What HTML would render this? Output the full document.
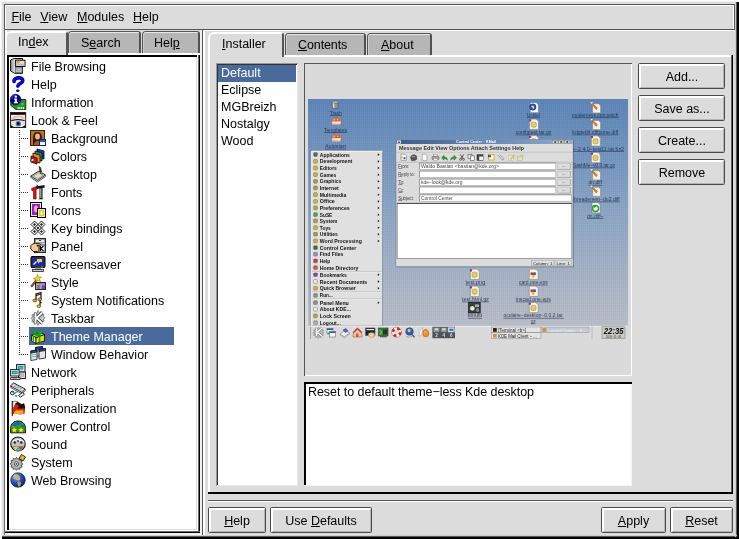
<!DOCTYPE html>
<html>
<head>
<meta charset="utf-8">
<title>KDE Control Center</title>
<style>
html,body{margin:0;padding:0;}
body{width:739px;height:539px;overflow:hidden;background:#dcdcdc;position:relative;
 font-family:"Liberation Sans",sans-serif;font-size:12.5px;color:#000;letter-spacing:0;}
#root{position:absolute;left:0;top:0;width:739px;height:539px;will-change:transform;opacity:0.999;}
.a{position:absolute;box-sizing:border-box;}
.l{position:absolute;}
u{text-decoration:underline;text-underline-offset:1px;text-decoration-thickness:1px;}
.mi{position:absolute;top:9px;line-height:16px;height:16px;white-space:nowrap;}
.tab{position:absolute;box-sizing:border-box;background:#b6b6b6;
 border-top:1px solid #555;border-left:1px solid #555;border-right:2px solid #505050;
 border-radius:4px 3px 0 0;text-align:center;white-space:nowrap;}
.tab:before{content:"";position:absolute;left:0;top:0;right:0;bottom:0;border-top:1px solid #e8e8e8;border-left:1px solid #ccc;border-radius:3px 1px 0 0;}
.tab.act{background:#dcdcdc;border-top:2px solid #fff;border-left:2px solid #fff;border-right:2px solid #555;border-radius:6px 3px 0 0;}
.tab.act:before{display:none;}
.row{position:absolute;height:18px;line-height:18px;white-space:nowrap;}
.sel{background:#4a6a9c;color:#fff;}
.ico{position:absolute;width:16px;height:16px;overflow:visible;}
.btn{position:absolute;box-sizing:border-box;background:#dcdcdc;text-align:center;white-space:nowrap;
 border:1px solid #4a4a4a;border-radius:1.5px;}
.btn:before{content:"";position:absolute;left:0;top:0;right:0;bottom:0;border-right:1px solid #b4b4b4;border-bottom:1px solid #b4b4b4;border-top:2px solid #fff;border-left:2px solid #fff;}
.btn span{position:relative;}
</style>
</head>
<body>
<div id="root">
<div class="l" style="left:736px;top:2px;width:1px;height:537px;background:#5a5a5a;"></div>
<div class="l" style="left:2px;top:536px;width:737px;height:1px;background:#5a5a5a;"></div>
<div class="l" style="left:735px;top:2px;width:1px;height:535px;background:#cfcfcf;"></div>
<div class="l" style="left:2px;top:535px;width:735px;height:1px;background:#cfcfcf;"></div>
<div class="l" style="left:737px;top:2px;width:2px;height:537px;background:#000;"></div>
<div class="l" style="left:2px;top:537px;width:737px;height:2px;background:#000;"></div>
<div class="l" style="left:0px;top:0px;width:739px;height:1px;background:#fff;"></div>
<div class="l" style="left:0px;top:0px;width:1px;height:539px;background:#fff;"></div>
<div class="l" style="left:1px;top:1px;width:738px;height:1px;background:#f0f0f0;"></div>
<div class="l" style="left:1px;top:1px;width:1px;height:538px;background:#f0f0f0;"></div>
<div class="a" style="left:4px;top:4px;width:731px;height:26px;border:1px solid #555;background:#dcdcdc"></div>
<div class="l" style="left:5px;top:5px;width:729px;height:1px;background:#fff;"></div>
<div class="l" style="left:5px;top:5px;width:1px;height:24px;background:#fff;"></div>
<div class="l" style="left:733px;top:5px;width:1px;height:24px;background:#fff;"></div>
<span class="mi" style="left:11.400px"><u>F</u>ile</span>
<span class="mi" style="left:40.300px"><u>V</u>iew</span>
<span class="mi" style="left:77px"><u>M</u>odules</span>
<span class="mi" style="left:133px"><u>H</u>elp</span>
<div class="l" style="left:4px;top:30px;width:1px;height:505px;background:#666;"></div>
<div class="l" style="left:5px;top:30px;width:2px;height:503px;background:#fff;"></div>
<div class="tab act" style="left:5px;top:31px;width:63px;height:25px;line-height:18px;text-align:left;padding-left:11px">In<u>d</u>ex</div>
<div class="tab" style="left:68px;top:31px;width:73px;height:22px;line-height:23px;text-align:left;padding-left:12px">S<u>e</u>arch</div>
<div class="tab" style="left:142px;top:31px;width:58px;height:22px;line-height:23px;text-align:left;padding-left:11px">Hel<u>p</u></div>
<div class="l" style="left:68px;top:53px;width:132px;height:2px;background:#fff;"></div>
<div class="l" style="left:9px;top:57px;width:188px;height:473px;background:#fff;"></div>
<div class="l" style="left:7px;top:55px;width:2px;height:476px;background:#000;"></div>
<div class="l" style="left:7px;top:55px;width:190px;height:2px;background:#000;"></div>
<div class="l" style="left:196px;top:57px;width:1px;height:474px;background:#dcdcdc;"></div>
<div class="l" style="left:197px;top:55px;width:1px;height:476px;background:#fff;"></div>
<div class="l" style="left:9px;top:529px;width:188px;height:1px;background:#dcdcdc;"></div>
<div class="l" style="left:7px;top:530px;width:191px;height:1px;background:#fff;"></div>
<div class="l" style="left:198px;top:55px;width:1px;height:478px;background:#666;"></div>
<div class="l" style="left:199px;top:55px;width:1px;height:478px;background:#000;"></div>
<div class="l" style="left:5px;top:531px;width:195px;height:1px;background:#666;"></div>
<div class="l" style="left:5px;top:532px;width:195px;height:1px;background:#000;"></div>
<div class="l" style="left:200px;top:30px;width:2px;height:505px;background:#eee;"></div>
<div class="l" style="left:5px;top:533px;width:197px;height:2px;background:#f2f2f2;"></div>
<svg class="l" style="left:0;top:0" width="210" height="539" shape-rendering="crispEdges"><path d="M19.5 130V355" stroke="#333" stroke-width="1" stroke-dasharray="1 1"/><path d="M19 138.5H28" stroke="#333" stroke-width="1" stroke-dasharray="1 1"/><path d="M19 156.5H28" stroke="#333" stroke-width="1" stroke-dasharray="1 1"/><path d="M19 174.5H28" stroke="#333" stroke-width="1" stroke-dasharray="1 1"/><path d="M19 192.5H28" stroke="#333" stroke-width="1" stroke-dasharray="1 1"/><path d="M19 210.5H28" stroke="#333" stroke-width="1" stroke-dasharray="1 1"/><path d="M19 228.5H28" stroke="#333" stroke-width="1" stroke-dasharray="1 1"/><path d="M19 246.5H28" stroke="#333" stroke-width="1" stroke-dasharray="1 1"/><path d="M19 264.5H28" stroke="#333" stroke-width="1" stroke-dasharray="1 1"/><path d="M19 282.5H28" stroke="#333" stroke-width="1" stroke-dasharray="1 1"/><path d="M19 300.5H28" stroke="#333" stroke-width="1" stroke-dasharray="1 1"/><path d="M19 318.5H28" stroke="#333" stroke-width="1" stroke-dasharray="1 1"/><path d="M19 336.5H28" stroke="#333" stroke-width="1" stroke-dasharray="1 1"/><path d="M19 354.5H28" stroke="#333" stroke-width="1" stroke-dasharray="1 1"/></svg>
<svg class="ico" style="left:10px;top:58px" viewBox="0 0 16 16">
<defs><linearGradient id="gfb" x1="0" y1="0" x2="1" y2="0"><stop offset="0" stop-color="#8c8c8c"/><stop offset="1" stop-color="#e4e4e4"/></linearGradient></defs>
<path d="M.6 2L4.200 .500H12.500V15.300H4.700L.6 13z" fill="#c4c4c4" stroke="#000" stroke-width="1"/>
<path d="M1 2.200L4.800 .900V14.800L1 12.800z" fill="url(#gfb)"/>
<rect x="5.500" y="9.200" width="6.600" height="5.300" fill="#bcbcbc" stroke="#555" stroke-width=".6"/>
<rect x="7" y="11" width="3.600" height="1.500" fill="#e0e0e0" stroke="#777" stroke-width=".4"/>
<rect x="5.600" y="2.200" width="9.400" height="6.300" fill="#d4d4d4" stroke="#000" stroke-width=".9"/>
<rect x="6.500" y="2.800" width="3.200" height="2.600" fill="#f09848"/>
<rect x="9.700" y="3.300" width="4.500" height="2.400" fill="#f8dcc0"/>
<rect x="6.300" y="5.800" width="8" height="2.200" fill="#c0c0c0"/>
</svg><span class="row" style="left:31px;top:58px">File Browsing</span>
<svg class="ico" style="left:10px;top:76px" viewBox="0 0 16 16">
<path d="M4 5.400C3.500 1.300 12.800 .400 12.800 4.400 12.800 7.300 8.400 7.600 7.900 10" fill="none" stroke="#000058" stroke-width="3.600" stroke-linecap="round"/>
<path d="M4 5.400C3.500 1.300 12.800 .400 12.800 4.400 12.800 7.300 8.400 7.600 7.900 10" fill="none" stroke="#0808e8" stroke-width="2.400" stroke-linecap="round"/>
<path d="M7.800 11.200V9.500" stroke="#dcdcdc" stroke-width="0"/>
<ellipse cx="7.800" cy="14.800" rx="1.700" ry="1.200" fill="#000058"/><ellipse cx="7.800" cy="14.800" rx="1.100" ry=".7" fill="#0808e8"/>
</svg><span class="row" style="left:31px;top:76px">Help</span>
<svg class="ico" style="left:10px;top:94px" viewBox="0 0 16 16">
<path d="M.8 5.500H15.800V15.400H6L.8 11.500z" fill="#14a028" stroke="#042808" stroke-width=".9"/>
<rect x="7.600" y="13" width="1.100" height="2.200" fill="#f8f8c0"/><rect x="9.400" y="13" width="1.100" height="2.200" fill="#f8f8c0"/><rect x="11.200" y="13" width="1.100" height="2.200" fill="#f8f8c0"/><rect x="13" y="13" width="1.100" height="2.200" fill="#f8f8c0"/>
<rect x="13" y="6.800" width="2" height="1.300" fill="#e03820"/><rect x="11.500" y="9" width="2" height="1.800" fill="#a0a0a0"/>
<circle cx="5.600" cy="5.500" r="5.300" fill="#080890" stroke="#000030" stroke-width=".7"/>
<path d="M1.500 4.500A4.500 4.500 0 0 1 6 1" stroke="#2838e0" stroke-width="1.200" fill="none"/>
<rect x="4.900" y="4.600" width="2" height="4.200" fill="#fff"/><rect x="4" y="4.600" width="1.500" height="1" fill="#fff"/><rect x="3.800" y="8.200" width="4.200" height="1.100" fill="#fff"/><rect x="4.700" y="1.700" width="2.200" height="1.900" fill="#fff"/>
</svg><span class="row" style="left:31px;top:94px">Information</span>
<svg class="ico" style="left:10px;top:112px" viewBox="0 0 16 16">
<rect x=".4" y=".6" width="15.300" height="14.800" fill="#f8ecea" stroke="#000" stroke-width=".9"/>
<rect x=".8" y="1" width="14.500" height="1.800" fill="#0a0606"/>
<path d="M1.500 7.500Q5 3.800 10 4.600T14.500 7.500" stroke="#eeb8b0" stroke-width="1.800" fill="none"/>
<path d="M1.200 8.800Q8 6.500 14.800 8.800" stroke="#201818" stroke-width="1.100" fill="none"/>
<path d="M1.200 11.500Q8 8 14.800 11.500Q8 15.500 1.200 11.500z" fill="#fff" stroke="#988" stroke-width=".4"/>
<circle cx="8.300" cy="11.700" r="2.700" fill="#4878b8"/><circle cx="8.300" cy="11.700" r="1.900" fill="#20a0a0" opacity=".6"/>
<circle cx="8.300" cy="11.700" r="1.400" fill="#000"/>
<path d="M.8 14.900h3l-3-2zM15.300 14.900h-3l3-2z" fill="#0a0606"/>
</svg><span class="row" style="left:31px;top:112px">Look &amp; Feel</span>
<svg class="ico" style="left:30px;top:130px" viewBox="0 0 16 16">
<rect x=".5" y=".5" width="14" height="15" fill="#b87030" stroke="#402008" stroke-width="1"/>
<path d="M3 15V9c0-2 0-7 4.500-7S12 7 12 9v6z" fill="#3a1c0c"/>
<ellipse cx="7.500" cy="6.500" rx="2.400" ry="3" fill="#f0b878"/>
<path d="M4 15c0-3 2-4 3.500-4s3.500 1 3.500 4z" fill="#a85828"/>
<rect x="9.500" y="9.500" width="6" height="6" fill="#f4f4f4" stroke="#182870" stroke-width="1"/>
<rect x="10" y="10" width="5" height="2" fill="#2858c8"/>
</svg><span class="row" style="left:51px;top:130px">Background</span>
<svg class="ico" style="left:30px;top:148px" viewBox="0 0 16 16">
<path d="M7 1l7 2v8l-7-2z" fill="#1838d0" stroke="#000" stroke-width=".8"/>
<path d="M5 3l7 2v8l-7-2z" fill="#18a040" stroke="#000" stroke-width=".8"/>
<path d="M3 5l7 2v8l-7-2z" fill="#f08818" stroke="#000" stroke-width=".8"/>
<path d="M1 8l6 2v6l-6-2z" fill="#e01818" stroke="#000" stroke-width=".8"/>
<path d="M1 11l3-1v3l-3 1z" fill="#f8d8c0" stroke="#000" stroke-width=".6"/>
</svg><span class="row" style="left:51px;top:148px">Colors</span>
<svg class="ico" style="left:30px;top:166px" viewBox="0 0 16 16">
<path d="M.8 10L9 5l6.500 4-8 5.500z" fill="#c8c8c8" stroke="#333" stroke-width="1"/>
<path d="M3.500 10L9 6.800l4 2.400-5.500 3.600z" fill="#f0d8c0" stroke="#888" stroke-width=".6"/>
<path d="M.8 10v1.500l6.700 4.500 8-5.500V9" fill="none" stroke="#555" stroke-width="1"/>
<path d="M9 .500l1.500 1L12 8l-1.500-.5z" fill="#444" stroke="#111" stroke-width=".7"/>
<path d="M11 6l1.500 3" stroke="#999" stroke-width="1"/>
</svg><span class="row" style="left:51px;top:166px">Desktop</span>
<svg class="ico" style="left:30px;top:184px" viewBox="0 0 16 16">
<path d="M1.500 4.500l6-2.500.6 2.600-2 .8V15H3.500V6.200l-1.500.7z" fill="#e01010" stroke="#600" stroke-width=".6"/>
<path d="M6 2.500l8.500-1.500v3l-2-.2V14.500l1 .8H8.500l1-.8V4.300l-2.500.6z" fill="#111"/>
<path d="M10 4.500h1.500v9.500H10z" fill="#999"/>
<path d="M6.500 1l2 1.500" stroke="#333" stroke-width="1"/>
</svg><span class="row" style="left:51px;top:184px">Fonts</span>
<svg class="ico" style="left:30px;top:202px" viewBox="0 0 16 16">
<rect x=".5" y=".5" width="11" height="14" fill="#e8e8e8" stroke="#000" stroke-width="1"/>
<rect x="2" y="2" width="8" height="11" fill="#a020b0"/>
<ellipse cx="6" cy="7" rx="2" ry="3.500" fill="#e8a8e0"/>
<rect x="7.500" y="6.500" width="8" height="9" fill="#e8e8e8" stroke="#000" stroke-width="1"/>
<rect x="9" y="8" width="5" height="6" fill="#d8d018"/>
<ellipse cx="11.500" cy="11" rx="1.300" ry="2" fill="#f8f8a0"/>
</svg><span class="row" style="left:51px;top:202px">Icons</span>
<svg class="ico" style="left:30px;top:220px" viewBox="0 0 16 16">
<g stroke="#111" stroke-width=".9" fill="#f4f4f4">
<path d="M4.500 1L8 4.500 4.500 8 1 4.500z"/><path d="M11.500 1L15 4.500 11.500 8 8 4.500z"/>
<path d="M8 4.500L11.500 8 8 11.500 4.500 8z"/><path d="M4.500 8L8 11.500 4.500 15 1 11.500z"/>
<path d="M11.500 8L15 11.500 11.500 15 8 11.500z"/></g>
<g fill="#222"><path d="M4.500 3L6 4.500 4.500 6 3 4.500z"/><path d="M11.500 3L13 4.500 11.500 6 10 4.500z"/><path d="M8 6.500L9.500 8 8 9.500 6.500 8z"/><path d="M4.500 10L6 11.500 4.500 13 3 11.500z"/><path d="M11.500 10L13 11.500 11.500 13 10 11.500z"/></g>
</svg><span class="row" style="left:51px;top:220px">Key bindings</span>
<svg class="ico" style="left:30px;top:238px" viewBox="0 0 16 16">
<rect x="4.500" y=".5" width="11" height="14" fill="#c4c4c4" stroke="#222" stroke-width="1"/>
<rect x="5.500" y="1.500" width="9" height="3" fill="#e8e8e8" stroke="#666" stroke-width=".5"/>
<path d="M9 2.500h2" stroke="#333"/>
<rect x="9" y="7" width="6" height="7" fill="#f0f0f0" stroke="#333" stroke-width=".7"/>
<path d="M10.500 8v5M13.500 8l-3 2.500 3 2.500" stroke="#000" stroke-width="1.100" fill="none"/>
<path d="M.8 7.500c1-1.500 3-2 4.500-2l4.500.2c1 0 1 1.600 0 1.600H7v.7h2v4.500L7.500 13.500H3.500L.8 11z" fill="#f4c898" stroke="#201008" stroke-width=".9"/>
</svg><span class="row" style="left:51px;top:238px">Panel</span>
<svg class="ico" style="left:30px;top:256px" viewBox="0 0 16 16">
<rect x="1" y=".5" width="14" height="11" rx="1" fill="#303030" stroke="#000" stroke-width="1"/>
<rect x="2.500" y="2" width="11" height="8" fill="#1828c0"/>
<path d="M7 3h5v3H9.500L8 8V6H7z" fill="#f0d820"/>
<path d="M3 8l3-3 1 1-3 3z" fill="#e8e8f8"/>
<rect x="5" y="11.500" width="6" height="2" fill="#999"/>
<rect x="2.500" y="13.500" width="11" height="2" fill="#c8c8c8" stroke="#222" stroke-width=".8"/>
<rect x="11" y="10.500" width="2" height="1" fill="#30e040"/>
</svg><span class="row" style="left:51px;top:256px">Screensaver</span>
<svg class="ico" style="left:30px;top:274px" viewBox="0 0 16 16">
<path d="M.8 12L6.500 5l1.200 1L2 13z" fill="#c85018" stroke="#401000" stroke-width=".7"/>
<path d="M7.500 .500l1 2.800 3-.3-2.300 2 1.600 2.600-2.900-1.200L5.700 8.800l.4-3L3.200 4.400l3-.6z" fill="#f8e020" stroke="#806000" stroke-width=".5"/>
<rect x="5.500" y="8.500" width="10" height="7" fill="#d0d0d0" stroke="#222" stroke-width="1"/>
<rect x="6" y="9" width="9" height="1.500" fill="#888"/>
<rect x="11.500" y="11" width="3.500" height="4" fill="#9038c8"/>
<rect x="7" y="11.500" width="3" height="3" fill="#f0f0f0" stroke="#444" stroke-width=".6"/>
<path d="M7.700 12.200l1.600 1.600m0-1.600l-1.600 1.600" stroke="#000" stroke-width=".7"/>
</svg><span class="row" style="left:51px;top:274px">Style</span>
<svg class="ico" style="left:30px;top:292px" viewBox="0 0 16 16">
<path d="M6 8V2l5-1.500V7" fill="none" stroke="#111" stroke-width="1.200"/>
<path d="M6 3.500l5-1.500" stroke="#111" stroke-width="1.200"/>
<ellipse cx="4.800" cy="8.500" rx="1.900" ry="1.500" fill="#f09818" stroke="#402000" stroke-width=".6"/>
<ellipse cx="9.800" cy="7.300" rx="1.900" ry="1.500" fill="#f09818" stroke="#402000" stroke-width=".6"/>
<path d="M10 14V9.500l1.500 1.500" fill="none" stroke="#111" stroke-width="1.100"/>
<ellipse cx="8.800" cy="14.200" rx="1.800" ry="1.400" fill="#f8c020" stroke="#402000" stroke-width=".6"/>
</svg><span class="row" style="left:51px;top:292px">System Notifications</span>
<svg class="ico" style="left:30px;top:310px" viewBox="0 0 16 16">
<path d="M8 .500l1.300 2 2.200-1 .3 2.400 2.400.3-1 2.200 2 1.300-2 1.300 1 2.200-2.400.3-.3 2.400-2.200-1L8 15.500l-1.300-2-2.200 1-.3-2.400-2.400-.3 1-2.200-2-1.300 2-1.300-1-2.200 2.400-.3.3-2.400 2.200 1z" fill="#c8c8c8" stroke="#666" stroke-width=".7"/>
<path d="M5.500 3v10M12 2.800L6.500 8l5.800 5.300" stroke="#222" stroke-width="3.400" fill="none"/>
<path d="M5.500 3v10M12 2.800L6.500 8l5.800 5.300" stroke="#fcfcfc" stroke-width="2" fill="none"/>
</svg><span class="row" style="left:51px;top:310px">Taskbar</span>
<div class="l" style="left:29px;top:327px;width:145px;height:18px;background:#4a6a9c;"></div>
<svg class="ico" style="left:30px;top:328px" viewBox="0 0 16 16">
<path d="M1.500 7l4.500 2.500v6L1.500 13z" fill="#f8f4b0" stroke="#201800" stroke-width=".9"/>
<path d="M6 9.500l8.500-3v6.500L6 15.500z" fill="#e8d818" stroke="#201800" stroke-width=".9"/>
<path d="M1.500 7L10 4.500l4.500 2L6 9.500z" fill="#f4ec40" stroke="#201800" stroke-width=".9"/>
<path d="M3.300 8v6M9.500 8.300v6" stroke="#10a818" stroke-width="1.600"/>
<path d="M3.500 5.800l7.500 2.200M5 8l6.500-2.500" stroke="#10a818" stroke-width="1.500"/>
<path d="M7.500 5.500C5 2 2.500 2.500 3 4s3 2 4.500 1.500C9 2 12.500 1.500 12.500 3.500S9.500 6 7.500 5.500z" fill="#18c020" stroke="#087010" stroke-width=".6"/>
</svg><span class="row" style="left:51px;top:328px;color:#fff">Theme Manager</span>
<svg class="ico" style="left:30px;top:346px" viewBox="0 0 16 16">
<g stroke="#111" stroke-width=".8">
<path d="M5.500 1.500l7-1v9l-7 1z" fill="#d8d8d8"/><path d="M5.500 1.500l7-1v2l-7 1z" fill="#2848c0"/>
<path d="M9 3.500l6.500-1v9.500L9 13z" fill="#e4e4e4"/><path d="M9 3.500l6.500-1v2L9 5.500z" fill="#2848c0"/>
<path d="M.8 5L7 4v9.500L.8 14.500z" fill="#e8e8e8"/><path d="M.8 5L7 4v2L.8 7z" fill="#2848c0"/>
</g>
<path d="M2 9l4-.6M2 11l4-.6" stroke="#5aa" stroke-width=".9"/>
</svg><span class="row" style="left:51px;top:346px">Window Behavior</span>
<svg class="ico" style="left:10px;top:364px" viewBox="0 0 16 16">
<rect x="6.500" y=".6" width="8.500" height="7.400" fill="#e8e8e8" stroke="#111" stroke-width=".9"/>
<rect x="8" y="2" width="5" height="3.200" fill="#30b8c0" stroke="#066" stroke-width=".4"/>
<rect x="8.500" y="8" width="7" height="6.500" fill="#dcdcdc" stroke="#111" stroke-width=".9"/>
<path d="M10 10h4M10 12h4" stroke="#777" stroke-width=".7"/>
<rect x=".6" y="5.600" width="8.500" height="6.400" fill="#f0f0f0" stroke="#111" stroke-width=".9"/>
<rect x="2" y="7" width="5.200" height="3" fill="#30b8c0" stroke="#066" stroke-width=".4"/>
<path d="M.6 13.500h9.500v2H.6z" fill="#e4e4e4" stroke="#111" stroke-width=".8"/>
<path d="M2 14.500h5" stroke="#888" stroke-width=".6"/>
</svg><span class="row" style="left:31px;top:364px">Network</span>
<svg class="ico" style="left:10px;top:382px" viewBox="0 0 16 16">
<path d="M.6 4L3.500 .800 15.200 7 12 10.500z" fill="#ececec" stroke="#111" stroke-width=".9"/>
<path d="M2.500 3.500l10 5.300M3.500 2.300l10 5.300M4.500 5.200l2-2.200M7 6.500l2-2.200M9.500 7.800l2-2.200" stroke="#888" stroke-width=".6"/>
<path d="M.6 4v1.500L12 12l3.200-3.500V7" fill="none" stroke="#333" stroke-width=".8"/>
<circle cx="2.300" cy="11" r="1.800" fill="#f4f4f4" stroke="#111" stroke-width=".9"/>
<path d="M2.300 9.300v1.500" stroke="#111" stroke-width=".6"/>
<path d="M4 12l3-2.200" stroke="#18a8b8" stroke-width="1.400"/>
<path d="M8.500 13.500l4-3 2 1.700-4 3z" fill="#f0f0f0" stroke="#111" stroke-width=".9"/>
<rect x="5" y="13" width="2" height="1.700" fill="#18a8b8"/>
</svg><span class="row" style="left:31px;top:382px">Peripherals</span>
<svg class="ico" style="left:10px;top:400px" viewBox="0 0 16 16">
<path d="M2.300 1v14.700" stroke="#111" stroke-width="1.200"/>
<path d="M2.800 1.800c1.500-1.500 3 .5 4.500-.6l1.500 3-6 4z" fill="#f8f8f8" stroke="#222" stroke-width=".6"/>
<path d="M5 4c2-3 4-1.500 5.500-.5s2 .5 3.500-.5l1.200 4-1 6-11 .5z" fill="#181010"/>
<path d="M4.500 5.500c1.500-2 3-1.500 4.500.2l-2 3.500H3z" fill="#e01810"/>
<path d="M2.800 9c1.500-2 2.500 1.500 4-1 1 2.500 2.500-1.500 4 1 1-1.500 2.500-.5 4-.5l-.5 6c-2-1.500-4 1-6-.5s-4 1-5.500-.5z" fill="#e02010"/>
<path d="M4 13c1-3 2-1 3-3.500 1 3 2-1 3 1.500 1-2 2.500 0 3.500 0l-.3 3.300c-1.500-1.500-3.500.8-5.500-.3S5.500 15 4 14z" fill="#f8b018"/>
<path d="M10 7l2-3 1.500 3.500z" fill="#181010"/>
</svg><span class="row" style="left:31px;top:400px">Personalization</span>
<svg class="ico" style="left:10px;top:418px" viewBox="0 0 16 16">
<path d="M.6 14.800V10.500C.6 5.500 4 3 8 3s7.400 2.500 7.400 7.500v4.300z" fill="#28a028" stroke="#081808" stroke-width="1"/>
<path d="M3 6.500c2-2.500 5-3 7.500-2 1 1.500-.5 2.500-2.500 2.500S5 8.500 3 8z" fill="#2858d0"/>
<path d="M11.500 7c1.500-.5 2.500.5 3 2-1.500 1-3 0-3-2z" fill="#2858d0"/>
<path d="M1.500 9.500c1.500-1 3-.5 3.500.5" stroke="#58d058" stroke-width="1" fill="none"/>
<g fill="#f8ec20" stroke="#403000" stroke-width=".35"><path d="M4.300 8.800l1 2 2.200.3-1.600 1.500.4 2.200-2-1-2 1 .4-2.200L1.100 11.100l2.200-.3z"/><path d="M11 8.800l1 2 2.200.3-1.600 1.500.4 2.200-2-1-2 1 .4-2.200-1.600-1.500 2.200-.3z"/></g>
</svg><span class="row" style="left:31px;top:418px">Power Control</span>
<svg class="ico" style="left:10px;top:436px" viewBox="0 0 16 16">
<ellipse cx="8" cy="8" rx="7.300" ry="7" fill="#c0c0c0" stroke="#181818" stroke-width="1.100"/>
<path d="M1.500 6C3 2 13 2 14.500 6 12 4.500 4 4.500 1.500 6z" fill="#f0f0f0"/>
<circle cx="4.800" cy="6.500" r="1.200" fill="#282828"/><circle cx="11.200" cy="6.500" r="1.200" fill="#282828"/><circle cx="8" cy="5" r="1" fill="#444"/>
<path d="M3 10.500h10L11 14.500H5z" fill="#e8e8e8" stroke="#444" stroke-width=".5"/>
<path d="M5 14.500l3-4 3 4z" fill="#28c0c0"/><path d="M3.500 11l4.500-.5-3 4z" fill="#e8d020"/><path d="M12.500 11L8 10.500l3 4z" fill="#e03828"/>
</svg><span class="row" style="left:31px;top:436px">Sound</span>
<svg class="ico" style="left:10px;top:454px" viewBox="0 0 16 16">
<path d="M6.500 3.500l1.200 1.700 2-.8.2 2.100 2.100.2-.8 2 1.700 1.200-1.700 1.200.8 2-2.100.2-.2 2.100-2-.8-1.200 1.700-1.200-1.700-2 .8-.2-2.100-2.100-.2.8-2L.1 9.900l1.700-1.200-.8-2 2.100-.2.2-2.100 2 .8z" fill="#b8b8b8" stroke="#333" stroke-width=".8"/>
<circle cx="6.500" cy="9.900" r="2.200" fill="#f0f0f0" stroke="#333" stroke-width=".8"/>
<circle cx="6.500" cy="9.900" r=".9" fill="#333"/>
<path d="M11.500 .500l4 2.500-2.500 4-4-2.500z" fill="#f8dc18" stroke="#181000" stroke-width=".9"/>
<path d="M11.700 2.700l1.600 1-1 1.600-1.600-1z" fill="#fff8c0" stroke="#604000" stroke-width=".5"/>
</svg><span class="row" style="left:31px;top:454px">System</span>
<svg class="ico" style="left:10px;top:472px" viewBox="0 0 16 16">
<defs><radialGradient id="gw" cx=".35" cy=".3" r=".8"><stop offset="0" stop-color="#78a8f0"/><stop offset=".5" stop-color="#2050c0"/><stop offset="1" stop-color="#081848"/></radialGradient></defs>
<circle cx="8" cy="8" r="7.300" fill="url(#gw)" stroke="#0a1840" stroke-width=".6"/>
<path d="M4 3.500c2-1.500 4-1 5 0s0 2 1 3-1 2.500-2.500 2S6 7 4.500 7 2.500 5 4 3.500z" fill="#d0b070"/>
<path d="M8 9.500c1.500-.5 3 .5 3 2s-1 3-2 3-1.500-2-1.500-3-.5-1.700.5-2z" fill="#b89858"/>
<path d="M3.500 4c1-1 2-1 2.500-.5" stroke="#f0e0b0" stroke-width=".8" fill="none"/>
</svg><span class="row" style="left:31px;top:472px">Web Browsing</span>
<div class="l" style="left:202px;top:30px;width:1px;height:505px;background:#555;"></div>
<div class="l" style="left:203px;top:30px;width:531px;height:1px;background:#fff;"></div>
<div class="l" style="left:203px;top:30px;width:2px;height:505px;background:#fff;"></div>
<div class="tab act" style="left:208px;top:32px;width:76px;height:25px;line-height:20px;text-align:left;padding-left:12px"><u>I</u>nstaller</div>
<div class="tab" style="left:285px;top:33px;width:81px;height:22px;line-height:22px;text-align:left;padding-left:12px;letter-spacing:-0.1px"><u>C</u>ontents</div>
<div class="tab" style="left:367px;top:33px;width:65px;height:22px;line-height:22px;text-align:left;padding-left:13px"><u>A</u>bout</div>
<div class="l" style="left:284px;top:55px;width:448px;height:2px;background:#fff;"></div>
<div class="l" style="left:208px;top:55px;width:2px;height:438px;background:#fff;"></div>
<div class="l" style="left:731px;top:55px;width:1px;height:439px;background:#666;"></div>
<div class="l" style="left:732px;top:55px;width:1px;height:439px;background:#000;"></div>
<div class="l" style="left:208px;top:492px;width:525px;height:2px;background:#000;"></div>
<div class="l" style="left:216px;top:63px;width:82px;height:423px;background:#fff;"></div>
<div class="l" style="left:216px;top:63px;width:82px;height:1px;background:#999;"></div>
<div class="l" style="left:216px;top:63px;width:1px;height:423px;background:#999;"></div>
<div class="l" style="left:217px;top:64px;width:81px;height:1px;background:#333;"></div>
<div class="l" style="left:217px;top:64px;width:1px;height:422px;background:#333;"></div>
<div class="l" style="left:297px;top:64px;width:1px;height:422px;background:#e8e8e8;"></div>
<div class="l" style="left:217px;top:485px;width:81px;height:1px;background:#e8e8e8;"></div>
<div class="l" style="left:218px;top:65px;width:78px;height:17px;background:#4a6a9c;"></div>
<span class="row" style="left:221px;top:64px;height:17px;line-height:18px;color:#fff">Default</span>
<span class="row" style="left:221px;top:81px;height:17px;line-height:18px">Eclipse</span>
<span class="row" style="left:221px;top:98px;height:17px;line-height:18px">MGBreizh</span>
<span class="row" style="left:221px;top:115px;height:17px;line-height:18px">Nostalgy</span>
<span class="row" style="left:221px;top:132px;height:17px;line-height:18px">Wood</span>
<div class="l" style="left:304px;top:63px;width:328px;height:313px;background:#dadada;"></div>
<div class="l" style="left:304px;top:63px;width:328px;height:1px;background:#555;"></div>
<div class="l" style="left:304px;top:63px;width:1px;height:313px;background:#555;"></div>
<div class="l" style="left:631px;top:64px;width:1px;height:312px;background:#fff;"></div>
<div class="l" style="left:305px;top:375px;width:327px;height:1px;background:#fff;"></div>
<svg class="l" style="left:308px;top:99px" width="320" height="240" viewBox="308 99 320 240" font-family="Liberation Sans, sans-serif"><defs><linearGradient id="dg" x1="0" y1="0" x2="0" y2="1"><stop offset="0" stop-color="#5c84b8"/><stop offset=".17" stop-color="#6c90bc"/><stop offset=".5" stop-color="#8ea6c4"/><stop offset=".75" stop-color="#a6b2c4"/><stop offset=".92" stop-color="#b6bcc6"/><stop offset="1" stop-color="#bcc0c6"/></linearGradient><linearGradient id="tg" x1="0" y1="0" x2="1" y2="0"><stop offset="0" stop-color="#3c5c96"/><stop offset="1" stop-color="#90acd2"/></linearGradient><pattern id="dith" width="2" height="2" patternUnits="userSpaceOnUse"><rect width="1" height="1" fill="#fff" opacity=".035"/><rect x="1" y="1" width="1" height="1" fill="#000" opacity=".03"/></pattern></defs><rect x="308" y="99" width="320" height="240" fill="url(#dg)"/><rect x="308" y="99" width="320" height="240" fill="url(#dith)"/><path d="M332.0 102.2h6.400l-.5 6.300h-5.400z" fill="#a8a8a8" stroke="#444" stroke-width=".5"/><path d="M333.5 102.5v5.500" stroke="#e8e8e8" stroke-width="1"/><path d="M336.0 102.5v5.500M337.3 102.5v5.500" stroke="#666" stroke-width=".5"/><ellipse cx="335.2" cy="102.1" rx="3.400" ry="1" fill="#d0d0d0" stroke="#444" stroke-width=".5"/><text x="329.8" y="114.6" font-size="4.8" fill="#1c2a48" opacity=".88" textLength="12.0" lengthAdjust="spacingAndGlyphs">Trash</text><rect x="329.8" y="115.2" width="12.0" height=".6" fill="#1c2a48" opacity=".85"/><path d="M332.1 118.6l7.600-.8 1.200 1v5.500l-1 1.200-7.300-.4-.8-1z" fill="#f4e6dc" stroke="#8a5a48" stroke-width=".4"/><path d="M332.3 118.8l7.300-.8 1 1v2.300l-8.300 .2z" fill="#dc4c2c"/><path d="M333.3 119.3l2-.2v1.500l-2 .1zM336.8 119.0l1.800-.2v1.500l-1.800 .1z" fill="#f4c040"/><path d="M332.6 124.1l7.500 .4.800-1" stroke="#8c8480" stroke-width=".8" fill="none"/><text x="324.0" y="131.6" font-size="4.8" fill="#1c2a48" opacity=".88" textLength="23.0" lengthAdjust="spacingAndGlyphs">Templates</text><rect x="324.0" y="132.2" width="23.0" height=".6" fill="#1c2a48" opacity=".85"/><path d="M332.1 135.3l7.600-.8 1.200 1v5.500l-1 1.200-7.300-.4-.8-1z" fill="#f4e6dc" stroke="#8a5a48" stroke-width=".4"/><path d="M332.3 135.5l7.300-.8 1 1v2.300l-8.300 .2z" fill="#dc4c2c"/><path d="M333.3 136.0l2-.2v1.500l-2 .1zM336.8 135.7l1.800-.2v1.500l-1.800 .1z" fill="#f4c040"/><path d="M332.6 140.8l7.500 .4.800-1" stroke="#8c8480" stroke-width=".8" fill="none"/><text x="325.0" y="148.1" font-size="4.8" fill="#1c2a48" opacity=".88" textLength="21.0" lengthAdjust="spacingAndGlyphs">Autostart</text><rect x="325.0" y="148.7" width="21.0" height=".6" fill="#1c2a48" opacity=".85"/><g transform="translate(533.5 107.3) scale(1.32) translate(-533.5 -107.3)"><path d="M531.0 103.6h4.500l1.800 1.800v6h-6.300z" fill="#f6f6f6" stroke="#70757c" stroke-width=".5"/><circle cx="533.0" cy="107.1" r="2.400" fill="#2858c8" stroke="#102868" stroke-width=".4"/><path d="M531.8 106.3q1.200-.8 2 .4t-.6 1.800z" fill="#e8d8a0"/></g><text x="526.8" y="116.9" font-size="4.8" fill="#1c2a48" opacity=".88" textLength="13.0" lengthAdjust="spacingAndGlyphs">Untitel</text><rect x="526.8" y="117.5" width="13.0" height=".6" fill="#1c2a48" opacity=".85"/><g transform="translate(533.5 124) scale(1.32) translate(-533.5 -124)"><path d="M530.5 120.3h5l1.800 1.800v6h-6.800z" fill="#f6f2ea" stroke="#8a8478" stroke-width=".5"/><rect x="531.8" y="122.6" width="3.800" height="3.800" rx="1.200" fill="#e4d060" stroke="#988030" stroke-width=".4"/><rect x="530.1" y="120.39999999999999" width="1.700" height="1.700" fill="#9030b0"/></g><text x="515.8" y="134.0" font-size="4.8" fill="#1c2a48" opacity=".88" textLength="35.5" lengthAdjust="spacingAndGlyphs">configtest.tar.gz</text><rect x="515.8" y="134.6" width="35.5" height=".6" fill="#1c2a48" opacity=".85"/><g transform="translate(533.5 140.5) scale(1.32) translate(-533.5 -140.5)"><path d="M530.5 136.8h5l1.800 1.800v6h-6.800z" fill="#f6f2ea" stroke="#8a8478" stroke-width=".5"/><rect x="531.8" y="139.10000000000002" width="3.800" height="3.800" rx="1.200" fill="#e4d060" stroke="#988030" stroke-width=".4"/><rect x="530.1" y="136.9" width="1.700" height="1.700" fill="#9030b0"/></g><g transform="translate(595.3 107.3) scale(1.32) translate(-595.3 -107.3)"><path d="M593.3 104.6h4.500l1.500 1.500v5.500h-6z" fill="#f4f0e8" stroke="#8a8478" stroke-width=".5"/><path d="M591.3 103.1l5.500 4.500-.8 1.500z" fill="#f08818" stroke="#a04800" stroke-width=".4"/><path d="M591.3 103.1l2.200 .6-.9 1.200z" fill="#fff4c0"/></g><text x="572.0" y="116.9" font-size="4.8" fill="#1c2a48" opacity=".88" textLength="46.5" lengthAdjust="spacingAndGlyphs">modernsys.cpp.patch</text><rect x="572.0" y="117.5" width="46.5" height=".6" fill="#1c2a48" opacity=".85"/><g transform="translate(595.3 124) scale(1.32) translate(-595.3 -124)"><path d="M593.3 121.3h4.500l1.500 1.500v5.500h-6z" fill="#f4f0e8" stroke="#8a8478" stroke-width=".5"/><path d="M591.3 119.8l5.500 4.500-.8 1.500z" fill="#f08818" stroke="#a04800" stroke-width=".4"/><path d="M591.3 119.8l2.200 .6-.9 1.200z" fill="#fff4c0"/></g><text x="572.3" y="134.0" font-size="4.8" fill="#1c2a48" opacity=".88" textLength="46.0" lengthAdjust="spacingAndGlyphs">kdgtetbl.cfftyone.diff</text><rect x="572.3" y="134.6" width="46.0" height=".6" fill="#1c2a48" opacity=".85"/><g transform="translate(595.3 140.7) scale(1.32) translate(-595.3 -140.7)"><path d="M592.3 137.0h5l1.800 1.800v6h-6.800z" fill="#f6f2ea" stroke="#8a8478" stroke-width=".5"/><rect x="593.5999999999999" y="139.3" width="3.800" height="3.800" rx="1.200" fill="#e4d060" stroke="#988030" stroke-width=".4"/><rect x="591.9" y="137.1" width="1.700" height="1.700" fill="#9030b0"/></g><text x="572.0" y="150.7" font-size="4.8" fill="#1c2a48" opacity=".88" textLength="52.0" lengthAdjust="spacingAndGlyphs">e&#8722;2.4.0&#8722;test11.tar.bz2</text><rect x="572.0" y="151.3" width="52.0" height=".6" fill="#1c2a48" opacity=".85"/><g transform="translate(595.3 157.3) scale(1.32) translate(-595.3 -157.3)"><path d="M592.3 153.60000000000002h5l1.800 1.800v6h-6.800z" fill="#f6f2ea" stroke="#8a8478" stroke-width=".5"/><rect x="593.5999999999999" y="155.90000000000003" width="3.800" height="3.800" rx="1.200" fill="#e4d060" stroke="#988030" stroke-width=".4"/><rect x="591.9" y="153.70000000000002" width="1.700" height="1.700" fill="#9030b0"/></g><text x="573.0" y="167.0" font-size="4.8" fill="#1c2a48" opacity=".88" textLength="42.0" lengthAdjust="spacingAndGlyphs">SashMe&#8722;v0.9.tar.gz</text><rect x="573.0" y="167.6" width="42.0" height=".6" fill="#1c2a48" opacity=".85"/><g transform="translate(595.3 174.3) scale(1.32) translate(-595.3 -174.3)"><path d="M593.3 171.60000000000002h4.500l1.500 1.500v5.500h-6z" fill="#f4f0e8" stroke="#8a8478" stroke-width=".5"/><path d="M591.3 170.10000000000002l5.500 4.500-.8 1.500z" fill="#f08818" stroke="#a04800" stroke-width=".4"/><path d="M591.3 170.10000000000002l2.200 .6-.9 1.200z" fill="#fff4c0"/></g><text x="588.4" y="184.3" font-size="4.8" fill="#1c2a48" opacity=".88" textLength="13.7" lengthAdjust="spacingAndGlyphs">dn.diff</text><rect x="588.4" y="184.9" width="13.7" height=".6" fill="#1c2a48" opacity=".85"/><g transform="translate(595.3 190.7) scale(1.32) translate(-595.3 -190.7)"><path d="M593.3 188.0h4.500l1.500 1.500v5.500h-6z" fill="#f4f0e8" stroke="#8a8478" stroke-width=".5"/><path d="M591.3 186.5l5.500 4.500-.8 1.500z" fill="#f08818" stroke="#a04800" stroke-width=".4"/><path d="M591.3 186.5l2.200 .6-.9 1.200z" fill="#fff4c0"/></g><text x="572.9" y="201.0" font-size="4.8" fill="#1c2a48" opacity=".88" textLength="46.7" lengthAdjust="spacingAndGlyphs">threadenem&#8722;du2.diff</text><rect x="572.9" y="201.6" width="46.7" height=".6" fill="#1c2a48" opacity=".85"/><g transform="translate(595.3 207.5) scale(1.32) translate(-595.3 -207.5)"><path d="M592.8 203.8h4.500l1.800 1.800v6h-6.300z" fill="#f6f6f6" stroke="#70757c" stroke-width=".5"/><circle cx="595.5" cy="208.3" r="2.300" fill="none" stroke="#28a030" stroke-width="1.100"/><path d="M593.8 205.8l2.500 .3-1.500 2z" fill="#28a030"/></g><text x="587.1" y="217.7" font-size="4.8" fill="#1c2a48" opacity=".88" textLength="16.4" lengthAdjust="spacingAndGlyphs">dn.diff~</text><rect x="587.1" y="218.3" width="16.4" height=".6" fill="#1c2a48" opacity=".85"/><g transform="translate(474.3 274) scale(1.32) translate(-474.3 -274)"><path d="M471.3 270.3h5l1.800 1.800v6h-6.800z" fill="#f6f2ea" stroke="#8a8478" stroke-width=".5"/><rect x="472.6" y="272.6" width="3.800" height="3.800" rx="1.200" fill="#e4d060" stroke="#988030" stroke-width=".4"/><rect x="470.90000000000003" y="270.40000000000003" width="1.700" height="1.700" fill="#9030b0"/></g><text x="465.5" y="284.1" font-size="4.8" fill="#1c2a48" opacity=".88" textLength="19.8" lengthAdjust="spacingAndGlyphs">test.png</text><rect x="465.5" y="284.7" width="19.8" height=".6" fill="#1c2a48" opacity=".85"/><g transform="translate(474.3 291) scale(1.32) translate(-474.3 -291)"><path d="M471.3 287.3h5l1.800 1.800v6h-6.800z" fill="#f6f2ea" stroke="#8a8478" stroke-width=".5"/><rect x="472.6" y="289.6" width="3.800" height="3.800" rx="1.200" fill="#e4d060" stroke="#988030" stroke-width=".4"/><rect x="470.90000000000003" y="287.40000000000003" width="1.700" height="1.700" fill="#9030b0"/></g><text x="462.0" y="301.0" font-size="4.8" fill="#1c2a48" opacity=".88" textLength="27.0" lengthAdjust="spacingAndGlyphs">test.html.gz</text><rect x="462.0" y="301.6" width="27.0" height=".6" fill="#1c2a48" opacity=".85"/><g transform="translate(474.3 307.3) scale(1.32) translate(-474.3 -307.3)"><rect x="469.8" y="303.6" width="9" height="8" fill="#384038" stroke="#101810" stroke-width=".5"/><circle cx="472.8" cy="308.1" r="2" fill="#e8e8e8" stroke="#111" stroke-width=".4"/><path d="M474.8 305.1h3v2h-3z" fill="#a8b0a8"/><path d="M475.8 308.1h2v2.500h-2z" fill="#889088"/></g><text x="467.8" y="317.3" font-size="4.8" fill="#1c2a48" opacity=".88" textLength="14.2" lengthAdjust="spacingAndGlyphs">kmulti</text><rect x="467.8" y="317.9" width="14.2" height=".6" fill="#1c2a48" opacity=".85"/><g transform="translate(533.2 274) scale(1.32) translate(-533.2 -274)"><path d="M530.2 270.3h5l1.800 1.800v6h-6.800z" fill="#f6f2ea" stroke="#8a8478" stroke-width=".5"/><rect x="531.2" y="272.8" width="2" height="2" fill="#d83020"/><rect x="533.2" y="272.8" width="2" height="2" fill="#3050c8"/><rect x="532.2" y="274.8" width="2" height="2" fill="#e8c020"/></g><text x="519.0" y="284.1" font-size="4.8" fill="#1c2a48" opacity=".88" textLength="28.6" lengthAdjust="spacingAndGlyphs">card.one.eps</text><rect x="519.0" y="284.7" width="28.6" height=".6" fill="#1c2a48" opacity=".85"/><g transform="translate(533.2 291) scale(1.32) translate(-533.2 -291)"><path d="M530.2 287.3h5l1.800 1.800v6h-6.800z" fill="#f6f2ea" stroke="#8a8478" stroke-width=".5"/><rect x="531.2" y="289.8" width="2" height="2" fill="#d83020"/><rect x="533.2" y="289.8" width="2" height="2" fill="#3050c8"/><rect x="532.2" y="291.8" width="2" height="2" fill="#e8c020"/></g><text x="515.8" y="301.0" font-size="4.8" fill="#1c2a48" opacity=".88" textLength="35.0" lengthAdjust="spacingAndGlyphs">inscad.one.eps</text><rect x="515.8" y="301.6" width="35.0" height=".6" fill="#1c2a48" opacity=".85"/><g transform="translate(533.2 307.3) scale(1.32) translate(-533.2 -307.3)"><path d="M530.2 303.6h5l1.800 1.800v6h-6.800z" fill="#f6f2ea" stroke="#8a8478" stroke-width=".5"/><rect x="531.5" y="305.90000000000003" width="3.800" height="3.800" rx="1.200" fill="#e4d060" stroke="#988030" stroke-width=".4"/><rect x="529.8000000000001" y="303.70000000000005" width="1.700" height="1.700" fill="#9030b0"/></g><text x="503.4" y="317.3" font-size="4.8" fill="#1c2a48" opacity=".88" textLength="60.3" lengthAdjust="spacingAndGlyphs">oculaire&#8722;desktop&#8722;0.0.2.tar.</text><rect x="503.4" y="317.9" width="60.3" height=".6" fill="#1c2a48" opacity=".85"/><text x="531.0" y="322.9" font-size="4.8" fill="#1c2a48" opacity=".88" textLength="4.6" lengthAdjust="spacingAndGlyphs">gz</text><rect x="531.0" y="323.5" width="4.6" height=".6" fill="#1c2a48" opacity=".85"/><rect x="397" y="140.5" width="177" height="127.0" fill="#000" opacity=".18"/><rect x="396" y="139.5" width="177" height="127.0" fill="#dcdcdc" stroke="#6c7480" stroke-width=".6"/><rect x="396.4" y="139.9" width="176.2" height="4.200" fill="url(#tg)"/><rect x="397" y="140.3" width="4" height="3.400" fill="#d8d8d8"/><path d="M398 142.9l1-1.800 1 1.800z" fill="#222"/><text x="456" y="143.2" font-size="4.200" font-weight="bold" fill="#fff" textLength="40" lengthAdjust="spacingAndGlyphs">Control Center &#8722; KMail</text><rect x="552.5" y="140.2" width="5.400" height="3.600" fill="#d8d8d8" stroke="#555" stroke-width=".3"/><rect x="554.3" y="141.3" width="1.800" height="1.400" fill="#222"/><rect x="558.5" y="140.2" width="5.400" height="3.600" fill="#d8d8d8" stroke="#555" stroke-width=".3"/><rect x="560.3" y="141.3" width="1.800" height="1.400" fill="#222"/><rect x="564.5" y="140.2" width="5.400" height="3.600" fill="#d8d8d8" stroke="#555" stroke-width=".3"/><rect x="566.3" y="141.3" width="1.800" height="1.400" fill="#222"/><rect x="396.4" y="144" width="176.2" height="8.200" fill="#dedede"/><path d="M396.4 152.300H572.6" stroke="#9a9a9a" stroke-width=".5"/><text x="399" y="150" font-size="5.600" font-weight="bold" fill="#202020" opacity=".9" textLength="125" lengthAdjust="spacingAndGlyphs">Message Edit View Options Attach Settings Help</text><rect x="396.4" y="152.600" width="176.2" height="9.600" fill="#dcdcdc"/><path d="M396.4 162.300H572.6" stroke="#a0a0a0" stroke-width=".5"/><path d="M401 154.2h4l1.500 1.500v4.700h-5.500z" fill="#fafafa" stroke="#667" stroke-width=".5"/><path d="M400 156.2l3 .5-1 2.500z" fill="#e8c020"/><rect x="403.5" y="157.2" width="2" height="2" fill="#3868c8"/><path d="M410.5 157.2q1-2.500 3.500-2.500l2.500 1.200v3.500l-2 1.200h-3z" fill="#555" stroke="#222" stroke-width=".5"/><path d="M412 156.7h3" stroke="#ddd" stroke-width=".6"/><path d="M422.3 154.2h3.200l1.500 1.500v4.700h-4.700z" fill="#fcfcfc" stroke="#778" stroke-width=".5"/><rect x="433.5" y="154.2" width="4" height="2.500" fill="#f8f8f8" stroke="#666" stroke-width=".4"/><rect x="432" y="156.5" width="7" height="3" rx=".6" fill="#b0b0b0" stroke="#444" stroke-width=".5"/><rect x="433.5" y="158.79999999999998" width="4" height="1.600" fill="#eee" stroke="#666" stroke-width=".3"/><path d="M441.5 157.7l2.500-2.500v1.600q3.500 0 3.500 3.500-1-1.800-3.500-1.800v1.700z" fill="#30a838" stroke="#105018" stroke-width=".4"/><path d="M456.5 157.7l-2.500-2.500v1.600q-3.500 0-3.500 3.500 1-1.800 3.500-1.800v1.700z" fill="#30a838" stroke="#105018" stroke-width=".4"/><path d="M460 154.2l3.500 5M464 154.2l-3.500 5" stroke="#333" stroke-width=".8" fill="none"/><circle cx="460.5" cy="159.4" r="1" fill="none" stroke="#333" stroke-width=".6"/><circle cx="463.5" cy="159.4" r="1" fill="none" stroke="#333" stroke-width=".6"/><rect x="468" y="154.2" width="4" height="4.500" fill="#eee" stroke="#333" stroke-width=".5"/><rect x="470.5" y="155.89999999999998" width="4" height="4.500" fill="#f8f8f8" stroke="#333" stroke-width=".5"/><rect x="477" y="154.7" width="6" height="5.700" fill="#444" stroke="#111" stroke-width=".4"/><rect x="479" y="156.2" width="4.500" height="4.200" fill="#f4f4f4" stroke="#444" stroke-width=".4"/><rect x="488.5" y="154.5" width="5.500" height="5.500" fill="#fcfcf0" stroke="#d8a818" stroke-width=".9"/><rect x="488" y="155.2" width="3" height="2" fill="#446"/><path d="M498 155.2l4 4.500q1 .8 1.600-.2t-.5-1.700l-3.200-3.200" stroke="#888" stroke-width=".8" fill="none"/><rect x="508.5" y="155.2" width="5" height="5" fill="#ececd8" stroke="#aaa" stroke-width=".4"/><path d="M510 158.7l4-4 1 1-4 4z" fill="#e8c860" stroke="#a08838" stroke-width=".3"/><rect x="517.5" y="156.7" width="5" height="3.700" fill="#e8e0b0" stroke="#a8a070" stroke-width=".4"/><path d="M520.5 156.7v-1.200q1.500-1.500 3 0v1.200" stroke="#b8b090" stroke-width=".7" fill="none"/><text x="398.300" y="167.89999999999998" font-size="4.800" fill="#383838" textLength="11" lengthAdjust="spacingAndGlyphs">From:</text><rect x="398.300" y="168.5" width="4" height=".5" fill="#333"/><rect x="419.500" y="163.0" width="136.29999999999995" height="6.400" fill="#fff" stroke="#a4a4a4" stroke-width=".6"/><path d="M419.500 163.0h136.29999999999995M419.500 163.0v6.400" stroke="#808080" stroke-width=".6" fill="none"/><text x="421" y="167.89999999999998" font-size="4.800" fill="#484848" textLength="78" lengthAdjust="spacingAndGlyphs">Waldo Bastian &lt;bastian@kde.org&gt;</text><rect x="557.800" y="163.2" width="12.400" height="6" fill="#dcdcdc" stroke="#777" stroke-width=".5"/><path d="M557.800 169.2v-6h12.400" stroke="#fff" stroke-width=".5" fill="none"/><text x="562.200" y="167.39999999999998" font-size="4" fill="#222">...</text><text x="398.300" y="175.89999999999998" font-size="4.800" fill="#383838" textLength="16.5" lengthAdjust="spacingAndGlyphs">Reply to:</text><rect x="398.300" y="176.5" width="4" height=".5" fill="#333"/><rect x="419.500" y="171.0" width="136.29999999999995" height="6.400" fill="#fff" stroke="#a4a4a4" stroke-width=".6"/><path d="M419.500 171.0h136.29999999999995M419.500 171.0v6.400" stroke="#808080" stroke-width=".6" fill="none"/><rect x="557.800" y="171.2" width="12.400" height="6" fill="#dcdcdc" stroke="#777" stroke-width=".5"/><path d="M557.800 177.2v-6h12.400" stroke="#fff" stroke-width=".5" fill="none"/><text x="562.200" y="175.39999999999998" font-size="4" fill="#222">...</text><text x="398.300" y="183.89999999999998" font-size="4.800" fill="#383838" textLength="5.7" lengthAdjust="spacingAndGlyphs">To:</text><rect x="398.300" y="184.5" width="4" height=".5" fill="#333"/><rect x="419.500" y="179.0" width="136.29999999999995" height="6.400" fill="#fff" stroke="#a4a4a4" stroke-width=".6"/><path d="M419.500 179.0h136.29999999999995M419.500 179.0v6.400" stroke="#808080" stroke-width=".6" fill="none"/><text x="421" y="183.89999999999998" font-size="4.800" fill="#484848" textLength="41.5" lengthAdjust="spacingAndGlyphs">kde&#8722;look@kde.org</text><rect x="557.800" y="179.2" width="12.400" height="6" fill="#dcdcdc" stroke="#777" stroke-width=".5"/><path d="M557.800 185.2v-6h12.400" stroke="#fff" stroke-width=".5" fill="none"/><text x="562.200" y="183.39999999999998" font-size="4" fill="#222">...</text><text x="398.300" y="191.79999999999998" font-size="4.800" fill="#383838" textLength="5.7" lengthAdjust="spacingAndGlyphs">Cc:</text><rect x="398.300" y="192.4" width="4" height=".5" fill="#333"/><rect x="419.500" y="186.9" width="136.29999999999995" height="6.400" fill="#fff" stroke="#a4a4a4" stroke-width=".6"/><path d="M419.500 186.9h136.29999999999995M419.500 186.9v6.400" stroke="#808080" stroke-width=".6" fill="none"/><rect x="557.800" y="187.1" width="12.400" height="6" fill="#dcdcdc" stroke="#777" stroke-width=".5"/><path d="M557.800 193.1v-6h12.400" stroke="#fff" stroke-width=".5" fill="none"/><text x="562.200" y="191.29999999999998" font-size="4" fill="#222">...</text><text x="398.300" y="199.7" font-size="4.800" fill="#383838" textLength="15.5" lengthAdjust="spacingAndGlyphs">Subject:</text><rect x="398.300" y="200.3" width="4" height=".5" fill="#333"/><rect x="419.500" y="194.8" width="152.0" height="6.400" fill="#fff" stroke="#a4a4a4" stroke-width=".6"/><path d="M419.500 194.8h152.0M419.500 194.8v6.400" stroke="#808080" stroke-width=".6" fill="none"/><text x="421" y="199.7" font-size="4.800" fill="#484848" textLength="32" lengthAdjust="spacingAndGlyphs">Control Center</text><rect x="397.200" y="203.400" width="174.600" height="55.200" fill="#fff" stroke="#666" stroke-width=".6"/><path d="M397.200 203.400h174.600" stroke="#333" stroke-width=".8"/><rect x="396.4" y="259.200" width="176.2" height="7" fill="#dcdcdc"/><rect x="531.500" y="260.200" width="22.500" height="5.400" fill="#e0e0e0" stroke="#888" stroke-width=".4"/><rect x="555" y="260.200" width="16.500" height="5.400" fill="#e0e0e0" stroke="#888" stroke-width=".4"/><text x="533" y="264.500" font-size="4.400" fill="#222" textLength="19.500" lengthAdjust="spacingAndGlyphs">Column: 1</text><text x="556.500" y="264.500" font-size="4.400" fill="#222" textLength="13.500" lengthAdjust="spacingAndGlyphs">Line: 1</text><rect x="311" y="150.7" width="71.69999999999999" height="175.3" fill="#e0e0e0" stroke="#70757c" stroke-width=".6"/><path d="M311.5 326V151.2H382.7" stroke="#fff" stroke-width=".7" fill="none"/><rect x="313.600" y="152.6" width="3.800" height="3.800" rx=".8" fill="#555" stroke="#554" stroke-width=".45" opacity=".9"/><text x="319.800" y="156.5" font-size="5.300" font-weight="bold" fill="#101010" textLength="30" lengthAdjust="spacingAndGlyphs">Applications</text><path d="M377.800 153.29999999999998l1.700 1.300-1.700 1.300z" fill="#111"/><rect x="313.600" y="159.4" width="3.800" height="3.800" rx=".8" fill="#d8b020" stroke="#554" stroke-width=".45" opacity=".9"/><text x="319.800" y="163.3" font-size="5.300" font-weight="bold" fill="#101010" textLength="32.5" lengthAdjust="spacingAndGlyphs">Development</text><path d="M377.800 160.1l1.700 1.300-1.700 1.300z" fill="#111"/><rect x="313.600" y="166" width="3.800" height="3.800" rx=".8" fill="#d8b020" stroke="#554" stroke-width=".45" opacity=".9"/><text x="319.800" y="169.9" font-size="5.300" font-weight="bold" fill="#101010" textLength="17" lengthAdjust="spacingAndGlyphs">Editors</text><path d="M377.800 166.7l1.700 1.300-1.700 1.300z" fill="#111"/><rect x="313.600" y="172.7" width="3.800" height="3.800" rx=".8" fill="#c8b020" stroke="#554" stroke-width=".45" opacity=".9"/><text x="319.800" y="176.6" font-size="5.300" font-weight="bold" fill="#101010" textLength="16.5" lengthAdjust="spacingAndGlyphs">Games</text><path d="M377.800 173.39999999999998l1.700 1.300-1.700 1.300z" fill="#111"/><rect x="313.600" y="179.4" width="3.800" height="3.800" rx=".8" fill="#b89020" stroke="#554" stroke-width=".45" opacity=".9"/><text x="319.800" y="183.3" font-size="5.300" font-weight="bold" fill="#101010" textLength="21.5" lengthAdjust="spacingAndGlyphs">Graphics</text><path d="M377.800 180.1l1.700 1.300-1.700 1.300z" fill="#111"/><rect x="313.600" y="186" width="3.800" height="3.800" rx=".8" fill="#a0a020" stroke="#554" stroke-width=".45" opacity=".9"/><text x="319.800" y="189.9" font-size="5.300" font-weight="bold" fill="#101010" textLength="19" lengthAdjust="spacingAndGlyphs">Internet</text><path d="M377.800 186.7l1.700 1.300-1.700 1.300z" fill="#111"/><rect x="313.600" y="192.7" width="3.800" height="3.800" rx=".8" fill="#c8b020" stroke="#554" stroke-width=".45" opacity=".9"/><text x="319.800" y="196.6" font-size="5.300" font-weight="bold" fill="#101010" textLength="26.5" lengthAdjust="spacingAndGlyphs">Multimedia</text><path d="M377.800 193.39999999999998l1.700 1.300-1.700 1.300z" fill="#111"/><rect x="313.600" y="199.4" width="3.800" height="3.800" rx=".8" fill="#d8b020" stroke="#554" stroke-width=".45" opacity=".9"/><text x="319.800" y="203.3" font-size="5.300" font-weight="bold" fill="#101010" textLength="15" lengthAdjust="spacingAndGlyphs">Office</text><path d="M377.800 200.1l1.700 1.300-1.700 1.300z" fill="#111"/><rect x="313.600" y="206" width="3.800" height="3.800" rx=".8" fill="#b0a820" stroke="#554" stroke-width=".45" opacity=".9"/><text x="319.800" y="209.9" font-size="5.300" font-weight="bold" fill="#101010" textLength="30" lengthAdjust="spacingAndGlyphs">Preferences</text><path d="M377.800 206.7l1.700 1.300-1.700 1.300z" fill="#111"/><rect x="313.600" y="212.7" width="3.800" height="3.800" rx=".8" fill="#38a838" stroke="#554" stroke-width=".45" opacity=".9"/><text x="319.800" y="216.6" font-size="5.300" font-weight="bold" fill="#101010" textLength="12.5" lengthAdjust="spacingAndGlyphs">SuSE</text><path d="M377.800 213.39999999999998l1.700 1.300-1.700 1.300z" fill="#111"/><rect x="313.600" y="219" width="3.800" height="3.800" rx=".8" fill="#a8a020" stroke="#554" stroke-width=".45" opacity=".9"/><text x="319.800" y="222.9" font-size="5.300" font-weight="bold" fill="#101010" textLength="17.5" lengthAdjust="spacingAndGlyphs">System</text><path d="M377.800 219.7l1.700 1.300-1.700 1.300z" fill="#111"/><rect x="313.600" y="225.8" width="3.800" height="3.800" rx=".8" fill="#d8b020" stroke="#554" stroke-width=".45" opacity=".9"/><text x="319.800" y="229.70000000000002" font-size="5.300" font-weight="bold" fill="#101010" textLength="11" lengthAdjust="spacingAndGlyphs">Toys</text><path d="M377.800 226.5l1.700 1.300-1.700 1.300z" fill="#111"/><rect x="313.600" y="232.3" width="3.800" height="3.800" rx=".8" fill="#98a020" stroke="#554" stroke-width=".45" opacity=".9"/><text x="319.800" y="236.20000000000002" font-size="5.300" font-weight="bold" fill="#101010" textLength="18" lengthAdjust="spacingAndGlyphs">Utilities</text><path d="M377.800 233.0l1.700 1.300-1.700 1.300z" fill="#111"/><rect x="313.600" y="239" width="3.800" height="3.800" rx=".8" fill="#d8b020" stroke="#554" stroke-width=".45" opacity=".9"/><text x="319.800" y="242.9" font-size="5.300" font-weight="bold" fill="#101010" textLength="42" lengthAdjust="spacingAndGlyphs">Word Processing</text><path d="M377.800 239.7l1.700 1.300-1.700 1.300z" fill="#111"/><rect x="313.600" y="245.8" width="3.800" height="3.800" rx=".8" fill="#286028" stroke="#554" stroke-width=".45" opacity=".9"/><text x="319.800" y="249.70000000000002" font-size="5.300" font-weight="bold" fill="#101010" textLength="36.5" lengthAdjust="spacingAndGlyphs">Control Center</text><rect x="313.600" y="252.3" width="3.800" height="3.800" rx=".8" fill="#8888c8" stroke="#554" stroke-width=".45" opacity=".9"/><text x="319.800" y="256.2" font-size="5.300" font-weight="bold" fill="#101010" textLength="23.5" lengthAdjust="spacingAndGlyphs">Find Files</text><rect x="313.600" y="259" width="3.800" height="3.800" rx=".8" fill="#d82828" stroke="#554" stroke-width=".45" opacity=".9"/><text x="319.800" y="262.9" font-size="5.300" font-weight="bold" fill="#101010" textLength="10.5" lengthAdjust="spacingAndGlyphs">Help</text><rect x="313.600" y="265.8" width="3.800" height="3.800" rx=".8" fill="#d84828" stroke="#554" stroke-width=".45" opacity=".9"/><text x="319.800" y="269.7" font-size="5.300" font-weight="bold" fill="#101010" textLength="38.5" lengthAdjust="spacingAndGlyphs">Home Directory</text><rect x="313.600" y="272.8" width="3.800" height="3.800" rx=".8" fill="#902890" stroke="#554" stroke-width=".45" opacity=".9"/><text x="319.800" y="276.7" font-size="5.300" font-weight="bold" fill="#101010" textLength="27" lengthAdjust="spacingAndGlyphs">Bookmarks</text><path d="M377.800 273.5l1.700 1.300-1.700 1.300z" fill="#111"/><rect x="313.600" y="279.6" width="3.800" height="3.800" rx=".8" fill="#f0f0f0" stroke="#554" stroke-width=".45" opacity=".9"/><text x="319.800" y="283.5" font-size="5.300" font-weight="bold" fill="#101010" textLength="47.5" lengthAdjust="spacingAndGlyphs">Recent Documents</text><path d="M377.800 280.3l1.700 1.300-1.700 1.300z" fill="#111"/><rect x="313.600" y="286.3" width="3.800" height="3.800" rx=".8" fill="#d8b020" stroke="#554" stroke-width=".45" opacity=".9"/><text x="319.800" y="290.2" font-size="5.300" font-weight="bold" fill="#101010" textLength="36" lengthAdjust="spacingAndGlyphs">Quick Browser</text><path d="M377.800 287.0l1.700 1.300-1.700 1.300z" fill="#111"/><rect x="313.600" y="293.5" width="3.800" height="3.800" rx=".8" fill="#888" stroke="#554" stroke-width=".45" opacity=".9"/><text x="319.800" y="297.4" font-size="5.300" font-weight="bold" fill="#101010" textLength="13" lengthAdjust="spacingAndGlyphs">Run...</text><rect x="313.600" y="300.8" width="3.800" height="3.800" rx=".8" fill="#888" stroke="#554" stroke-width=".45" opacity=".9"/><text x="319.800" y="304.7" font-size="5.300" font-weight="bold" fill="#101010" textLength="29" lengthAdjust="spacingAndGlyphs">Panel Menu</text><path d="M377.800 301.5l1.700 1.300-1.700 1.300z" fill="#111"/><rect x="313.600" y="307.3" width="3.800" height="3.800" rx=".8" fill="#f0f0f0" stroke="#554" stroke-width=".45" opacity=".9"/><text x="319.800" y="311.2" font-size="5.300" font-weight="bold" fill="#101010" textLength="31" lengthAdjust="spacingAndGlyphs">About KDE...</text><rect x="313.600" y="314" width="3.800" height="3.800" rx=".8" fill="#c8a020" stroke="#554" stroke-width=".45" opacity=".9"/><text x="319.800" y="317.9" font-size="5.300" font-weight="bold" fill="#101010" textLength="31" lengthAdjust="spacingAndGlyphs">Lock Screen</text><rect x="313.600" y="320.8" width="3.800" height="3.800" rx=".8" fill="#aaa" stroke="#554" stroke-width=".45" opacity=".9"/><text x="319.800" y="324.7" font-size="5.300" font-weight="bold" fill="#101010" textLength="21" lengthAdjust="spacingAndGlyphs">Logout...</text><path d="M311.8 271.6H381.9" stroke="#999" stroke-width=".5"/><path d="M311.8 272.1H381.9" stroke="#fff" stroke-width=".5"/><path d="M311.8 291.8H381.9" stroke="#999" stroke-width=".5"/><path d="M311.8 292.3H381.9" stroke="#fff" stroke-width=".5"/><path d="M311.8 299H381.9" stroke="#999" stroke-width=".5"/><path d="M311.8 299.5H381.9" stroke="#fff" stroke-width=".5"/><rect x="308" y="326" width="320" height="13" fill="#dadada"/><path d="M308 326.300H628" stroke="#f8f8f8" stroke-width=".6"/><path d="M310.500 326.500V339" stroke="#8c8c8c" stroke-width=".7"/><path d="M318.500 327l1 1.600 1.800-.8.200 1.900 1.900.2-.8 1.800 1.600 1-1.600 1 .8 1.800-1.900.2-.2 1.900-1.800-.8-1 1.600-1-1.600-1.800.8-.2-1.900-1.900-.2.800-1.800-1.600-1 1.600-1-.8-1.800 1.900-.2.200-1.900 1.800.8z" fill="#b8b8b8" stroke="#777" stroke-width=".4"/><path d="M316.500 328.300v8M322 328l-4.800 4.200 5 4.300" stroke="#555" stroke-width="2.400" fill="none" opacity=".7"/><path d="M316.500 328.300v8M322 328l-4.800 4.200 5 4.300" stroke="#fff" stroke-width="1.500" fill="none"/><rect x="327" y="328.500" width="6" height="5" fill="#f4f4f4" stroke="#556" stroke-width=".5"/><rect x="327" y="328.500" width="6" height="1.500" fill="#2858c0"/><rect x="329.500" y="331.500" width="6" height="5.500" fill="#f8f8f8" stroke="#556" stroke-width=".5"/><rect x="329.500" y="331.500" width="6" height="1.500" fill="#2858c0"/><rect x="327.500" y="332.500" width="2" height="2" fill="#30a040"/><path d="M340 334l5-3.500 4.500 2.500-5 3.800z" fill="#f0f0f0" stroke="#667" stroke-width=".5"/><path d="M343 330l3-1.500 2 2.500-2.500 1.500z" fill="#3870c8" stroke="#234" stroke-width=".4"/><path d="M340 334v1l4.500 2.800 5-3.800v-1" fill="none" stroke="#889" stroke-width=".5"/><path d="M353 337l.5-5 4-4 4 4 .5 5z" fill="#e8c8a0" stroke="#844" stroke-width=".5"/><path d="M352.500 332.500l5-5 5 5-1.500.5-3.500-3.500-3.500 3.500z" fill="#d03828"/><rect x="356" y="333.500" width="2.500" height="3.500" fill="#c86030"/><rect x="365.500" y="328" width="9.500" height="7.500" fill="#202428" stroke="#555" stroke-width=".6"/><rect x="366.500" y="329" width="7.500" height="1.200" fill="#e8e8e8"/><ellipse cx="371.500" cy="335" rx="3.200" ry="2.400" fill="#f0d0a0" stroke="#a07040" stroke-width=".4"/><rect x="378.500" y="328" width="9.500" height="8" fill="#38883a" stroke="#203820" stroke-width=".6"/><rect x="383" y="329.500" width="4.500" height="5" fill="#283038"/><path d="M379.500 330l2 2-1.500 2.500" stroke="#d8e040" stroke-width=".8" fill="none"/><rect x="380" y="336" width="6.500" height="1.300" fill="#555"/><circle cx="396.600" cy="332.200" r="3.600" fill="none" stroke="#f4f4f4" stroke-width="2.600"/><circle cx="396.600" cy="332.200" r="3.600" fill="none" stroke="#d82818" stroke-width="2.600" stroke-dasharray="2.830 2.830"/><circle cx="396.600" cy="332.200" r="5" fill="none" stroke="#733" stroke-width=".4"/><circle cx="409.500" cy="331.500" r="3.800" fill="#2860c0" stroke="#123870" stroke-width=".5"/><path d="M407.500 329.500q2-1.500 3 0t-1 2.500-2-2.500z" fill="#e8c840"/><path d="M411.500 334l3 3.200" stroke="#555" stroke-width="1.300"/><path d="M406 336.500q3 1.500 6 0" stroke="#999" stroke-width=".8" fill="none"/><path d="M419 336q-.5-5 3.500-8.500 1 4-2 8.500z" fill="#f8f8f8" stroke="#888" stroke-width=".4"/><path d="M423 331q3-3.500 5 0t-.5 5.500q-3 1-4.500-1z" fill="#f09020" stroke="#a85010" stroke-width=".5"/><path d="M424 332q2-.5 3 1" stroke="#f8d080" stroke-width=".8" fill="none"/><rect x="432.400" y="326.800" width="22.600" height="11.400" fill="#484c50"/><rect x="433.0" y="327.300" width="6.800" height="5" fill="#70747a"/><rect x="434.5" y="328.300" width="4" height="1.600" fill="#e0e0e0"/><rect x="434.0" y="330.300" width="4.800" height="1.200" fill="#b0b0b0"/><rect x="433.0" y="332.800" width="6.800" height="5" fill="#50545a"/><text x="435.2" y="337.300" font-size="4.600" font-weight="bold" fill="#d8d8d8">2</text><rect x="440.4" y="327.300" width="6.800" height="5" fill="#70747a"/><rect x="441.9" y="328.300" width="4" height="1.600" fill="#e0e0e0"/><rect x="441.4" y="330.300" width="4.800" height="1.200" fill="#b0b0b0"/><rect x="440.4" y="332.800" width="6.800" height="5" fill="#50545a"/><text x="442.59999999999997" y="337.300" font-size="4.600" font-weight="bold" fill="#d8d8d8">4</text><rect x="447.8" y="327.300" width="6.800" height="5" fill="#c8dcf4"/><rect x="449.3" y="328.800" width="4" height="2" fill="#3868c0"/><rect x="447.8" y="332.800" width="6.800" height="5" fill="#50545a"/><text x="450.0" y="337.300" font-size="4.600" font-weight="bold" fill="#d8d8d8">6</text><rect x="491.500" y="327" width="49.500" height="5.800" fill="#e4e4e4" stroke="#777" stroke-width=".4"/><rect x="491.500" y="332.800" width="49.500" height="5.800" fill="#e4e4e4" stroke="#777" stroke-width=".4"/><rect x="493" y="328" width="3.800" height="3.800" fill="#222"/><rect x="493" y="333.800" width="3.800" height="3.800" fill="#d89040"/><text x="498" y="331.700" font-size="4.600" fill="#222" textLength="28" lengthAdjust="spacingAndGlyphs">[Terminal &lt;b&gt;]</text><text x="498" y="337.500" font-size="4.600" fill="#222" textLength="39" lengthAdjust="spacingAndGlyphs">KDE Mail Client &#8722; ...</text><rect x="541" y="327" width="48" height="5.800" fill="#c4c8d0" stroke="#889" stroke-width=".4"/><path d="M592 326.500V339" stroke="#aaa" stroke-width=".6"/><rect x="542.500" y="328" width="3.800" height="3.800" fill="#d89040"/><text x="548" y="331.600" font-size="4.400" fill="#f4f4f8" textLength="38" lengthAdjust="spacingAndGlyphs">Control Center &#8722; K...</text><rect x="602" y="326.800" width="23" height="11.700" fill="#c8ccc4" stroke="#777" stroke-width=".5"/><text x="603.800" y="334.400" font-size="9.400" font-weight="bold" font-style="italic" fill="#101010" textLength="19.800" lengthAdjust="spacingAndGlyphs">22:35</text><text x="606" y="338" font-size="3.200" fill="#333" textLength="15" lengthAdjust="spacingAndGlyphs">2000&#8722;11&#8722;26</text></svg>
<div class="l" style="left:304px;top:382px;width:328px;height:104px;background:#fff;"></div>
<div class="l" style="left:304px;top:382px;width:328px;height:2px;background:#000;"></div>
<div class="l" style="left:304px;top:382px;width:2px;height:103px;background:#000;"></div>
<div class="l" style="left:631px;top:384px;width:1px;height:102px;background:#f4f4f4;"></div>
<div class="l" style="left:304px;top:485px;width:328px;height:1px;background:#f4f4f4;"></div>
<span class="row" style="left:308px;top:383px;line-height:18px;letter-spacing:-0.06px">Reset to default theme&#8722;less Kde desktop</span>
<div class="btn" style="left:638px;top:63px;width:87px;height:26px;line-height:27px;padding-left:1px"><span>Add...</span></div>
<div class="btn" style="left:638px;top:95px;width:87px;height:26px;line-height:27px;padding-left:1px"><span>Save as...</span></div>
<div class="btn" style="left:638px;top:127px;width:87px;height:26px;line-height:27px;padding-left:1px"><span>Create...</span></div>
<div class="btn" style="left:638px;top:159px;width:87px;height:26px;line-height:27px;padding-left:1px"><span>Remove</span></div>
<div class="l" style="left:208px;top:500px;width:525px;height:1px;background:#555;"></div>
<div class="l" style="left:208px;top:501px;width:525px;height:1px;background:#fff;"></div>
<div class="btn" style="left:208px;top:507px;width:58px;height:26px;line-height:27px"><span><u>H</u>elp</span></div>
<div class="btn" style="left:270px;top:507px;width:102px;height:26px;line-height:27px"><span>Use <u>D</u>efaults</span></div>
<div class="btn" style="left:601px;top:507px;width:65px;height:26px;line-height:27px"><span><u>A</u>pply</span></div>
<div class="btn" style="left:670px;top:507px;width:63px;height:26px;line-height:27px"><span><u>R</u>eset</span></div>
</div>
</body>
</html>
